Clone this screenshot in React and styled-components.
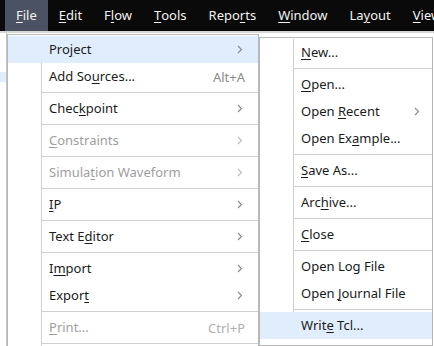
import React from 'react'
import styled, { createGlobalStyle } from 'styled-components'

const GlobalStyle = createGlobalStyle`
  html, body {
    margin: 0;
    padding: 0;
    background: #ffffff;
  }
  body {
    font-family: 'Noto Sans', 'Open Sans', sans-serif;
    font-size: 13px;
    color: #1b1b1b;
  }
`

let Page = styled.div`
  position: relative;
  width: 434px;
  height: 346px;
  overflow: hidden;
  background: #ffffff;
`

let MenuBar = styled.div`
  display: flex;
  align-items: stretch;
  height: 31px;
  padding-left: 5px;
  background: #0a0a0a;
  border-bottom: 2px solid #d6d6d6;
`

let BarItem = styled.div`
  display: flex;
  align-items: center;
  padding: 0 11px 1px;
  color: #f2f2f2;
  white-space: nowrap;
  background: ${props => (props.$active ? '#4a5263' : 'transparent')};
`

let Workspace = styled.div`
  display: flex;
  height: 313px;
`

let SidePanel = styled.div`
  width: 6px;
  border-right: 1px solid #c4c4c4;
  padding-top: 39px;
`

let SideRow = styled.div`
  height: 10px;
  background: #e1edfb;
`

let Menu = styled.div`
  position: absolute;
  left: ${props => props.$left}px;
  top: ${props => props.$top}px;
  width: ${props => props.$width}px;
  padding: 1px 0 6px;
  background: #ffffff;
  border: 1px solid #b8b8b8;
`

let Item = styled.div`
  display: grid;
  grid-template-columns: 34px 1fr auto;
  align-items: center;
  height: 27px;
  background: ${props => (props.$hover ? '#e0edfc' : 'transparent')};
  color: ${props => (props.$disabled ? '#9e9e9e' : '#1b1b1b')};
  white-space: nowrap;
`

let Gutter = styled.div`
  align-self: stretch;
  border-right: 1px solid ${props => (props.$hidden ? 'transparent' : '#cfcfcf')};
`

let Label = styled.span`
  padding-left: 7px;
  padding-bottom: 1px;
`

let Trail = styled.span`
  display: flex;
  align-items: center;
  padding-right: ${props => props.$pad}px;
  color: ${props => (props.$disabled ? '#b0b0b0' : '#8a8a8a')};
`

let Separator = styled.div`
  display: grid;
  grid-template-columns: 34px 1fr;
  height: 5px;
`

let SepLine = styled.div`
  align-self: center;
  height: 1px;
  background: #d0d0d0;
`

let Key = styled.span`
  text-decoration: underline;
  text-underline-offset: 2px;
  text-decoration-thickness: 1px;
`

function Chevron({ color }) {
  return (
    <svg width="6" height="9" viewBox="0 0 6 9">
      <polyline points="1,1 4.5,4.5 1,8" fill="none" stroke={color} strokeWidth="1.1" />
    </svg>
  )
}

// text with one underlined mnemonic letter
function Mn({ text, at }) {
  if (at < 0) return text
  return (
    <>
      {text.slice(0, at)}
      <Key>{text[at]}</Key>
      {text.slice(at + 1)}
    </>
  )
}

const menuBar = [
  ['File', 0, true],
  ['Edit', 0],
  ['Flow', 1],
  ['Tools', 0],
  ['Reports', 4],
  ['Window', 0],
  ['Layout', 2],
  ['View', 0],
]

const fileMenu = [
  { text: 'Project', at: 3, sub: true, hover: true },
  { text: 'Add Sources...', at: 6, shortcut: 'Alt+A' },
  'sep',
  { text: 'Checkpoint', at: 4, sub: true },
  'sep',
  { text: 'Constraints', at: 0, sub: true, disabled: true },
  'sep',
  { text: 'Simulation Waveform', at: 6, sub: true, disabled: true },
  'sep',
  { text: 'IP', at: 0, sub: true },
  'sep',
  { text: 'Text Editor', at: 6, sub: true },
  'sep',
  { text: 'Import', at: 1, sub: true },
  { text: 'Export', at: 5, sub: true },
  'sep',
  { text: 'Print...', at: 0, shortcut: 'Ctrl+P', disabled: true },
  'sep',
]

const projectMenu = [
  { text: 'New...', at: 0 },
  'sep',
  { text: 'Open...', at: 0 },
  { text: 'Open Recent', at: 5, sub: true },
  { text: 'Open Example...', at: 7 },
  'sep',
  { text: 'Save As...', at: 0 },
  'sep',
  { text: 'Archive...', at: 3 },
  'sep',
  { text: 'Close', at: 0 },
  'sep',
  { text: 'Open Log File', at: -1 },
  { text: 'Open Journal File', at: 5 },
  'sep',
  { text: 'Write Tcl...', at: 4, hover: true },
]

function MenuList({ items, pad }) {
  return items.map((it, i) => {
    if (it === 'sep') {
      return (
        <Separator key={i}>
          <Gutter />
          <SepLine />
        </Separator>
      )
    }
    return (
      <Item key={i} $hover={it.hover} $disabled={it.disabled}>
        <Gutter $hidden={it.hover} />
        <Label>
          <Mn text={it.text} at={it.at} />
        </Label>
        <Trail $pad={it.sub ? pad : pad - 2} $disabled={it.disabled}>
          {it.shortcut}
          {it.sub && <Chevron color={it.disabled ? '#bdbdbd' : '#8a8a8a'} />}
        </Trail>
      </Item>
    )
  })
}

export default function App() {
  return (
    <Page>
      <GlobalStyle />
      <MenuBar>
        {menuBar.map(([text, at, active]) => (
          <BarItem key={text} $active={active}>
            <Mn text={text} at={at} />
          </BarItem>
        ))}
      </MenuBar>
      <Workspace>
        <SidePanel>
          <SideRow />
        </SidePanel>
      </Workspace>
      <Menu $left={7} $top={34} $width={250}>
        <MenuList items={fileMenu} pad={15} />
      </Menu>
      <Menu $left={259} $top={37} $width={172}>
        <MenuList items={projectMenu} pad={12} />
      </Menu>
    </Page>
  )
}
